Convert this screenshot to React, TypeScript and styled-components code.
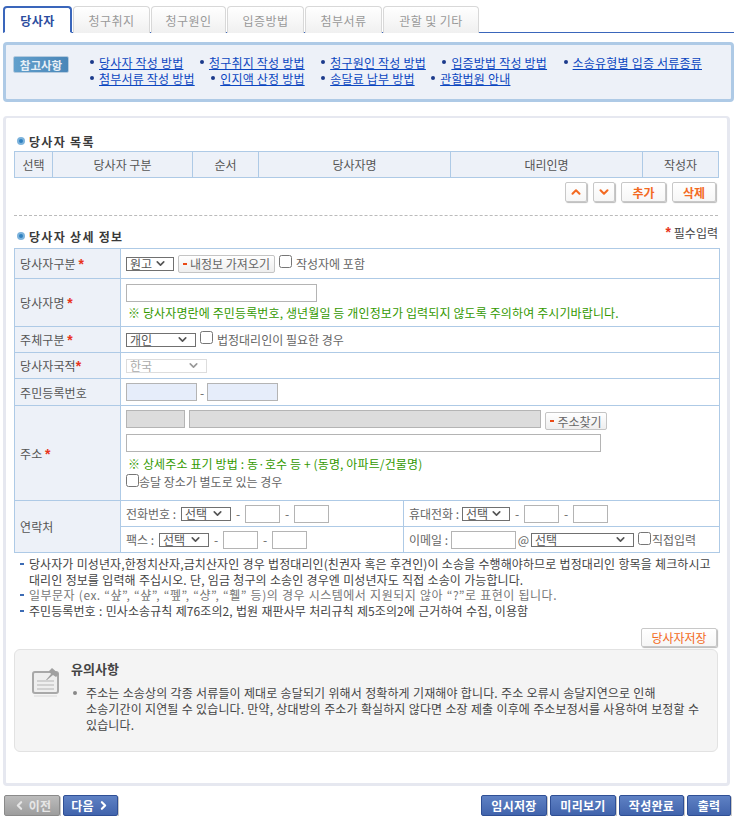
import React from 'react'
import styled, { createGlobalStyle } from 'styled-components'
import { ChevronDown, ChevronLeft, ChevronRight, ChevronUp } from 'lucide-react'

const GlobalStyle = createGlobalStyle`
  html, body {
    margin: 0;
    background: #fff;
  }
  body {
    font-family: "Noto Sans CJK KR", "Liberation Sans", sans-serif;
    font-size: 12px;
    color: #555;
  }
  * {
    box-sizing: border-box;
  }
`

const Page = styled.div`
  width: 731px;
  margin-left: 3px;
  padding-top: 6px;
`

// tabs
const TabBar = styled.div`
  display: flex;
  height: 27px;
  gap: 1px;
  border-bottom: 1px solid #3a66bb;
`

const Tab = styled.div<{ $width: number; $active?: boolean }>`
  width: ${p => p.$width}px;
  height: 27px;
  display: flex;
  align-items: center;
  justify-content: center;
  font-size: 12px;
  border-radius: 4px 4px 0 0;
  color: ${p => (p.$active ? '#2b4c9e' : '#999')};
  font-weight: ${p => (p.$active ? 700 : 400)};
  background: ${p => (p.$active ? '#fff' : 'linear-gradient(#fff, #f0f0f0)')};
  border: ${p => (p.$active ? '2px solid #3a66bb' : '1px solid #d8d8d8')};
  border-bottom: ${p => (p.$active ? '1px solid #fff' : 'none')};
  letter-spacing: 0.4px;
`

// top notice
const Notice = styled.div`
  margin-top: 9px;
  height: 60px;
  display: flex;
  align-items: flex-start;
  background: #edf1f8;
  border: 3px solid #aecae6;
  border-radius: 4px;
  padding: 9px 0 0 7px;
`

const Badge = styled.div`
  width: 56px;
  height: 17px;
  margin-top: 2px;
  flex: none;
  display: flex;
  align-items: center;
  justify-content: center;
  color: #e6eff6;
  font-size: 11.5px;
  font-weight: 700;
  border-radius: 2px;
  background: linear-gradient(90deg, #62a0cc, #4a86b8);
  border: 1px solid #b5cbdf;
`

const LinkList = styled.div`
  width: 640px;
  margin: 0 0 0 21px;
  display: flex;
  flex-wrap: wrap;
  column-gap: 16.5px;
  row-gap: 0;
`

const LinkItem = styled.div`
  display: flex;
  align-items: center;
  height: 16px;
`

const Dot = styled.span`
  width: 4px;
  height: 4px;
  margin-right: 5px;
  border-radius: 50%;
  background: #1b3a8c;
`

const HelpLink = styled.a`
  color: #0b46c0;
  text-decoration: underline;
  letter-spacing: 0.2px;
`

// main card
const Card = styled.div`
  margin-top: 14px;
  width: 727px;
  height: 670px;
  padding: 14px 9px 0 8px;
  background: #fff;
  border: 3px solid #e6e8f0;
  border-top-width: 2px;
  border-radius: 4px;
`

const SectionTitle = styled.h2`
  display: flex;
  align-items: center;
  gap: 4px;
  height: 18px;
  margin: 0 0 1px;
  font-size: 12px;
  font-weight: 700;
  color: #3a3a3a;
  letter-spacing: 1.3px;
`

const TitleMark = styled.span`
  width: 8px;
  height: 8px;
  margin-left: 3px;
  border-radius: 50%;
  background: #2f80c0;
  border: 2px solid #7db3dc;
`

const ListTable = styled.table`
  width: 704px;
  height: 27px;
  table-layout: fixed;
  border-collapse: collapse;
`

const HeadCell = styled.th<{ $width: number }>`
  width: ${p => p.$width}px;
  padding: 0;
  font-weight: 400;
  color: #555;
  background: #edf1f8;
  border: 1px solid #aecae6;
`

const ListActions = styled.div`
  display: flex;
  justify-content: flex-end;
  gap: 6px;
  margin-top: 4px;
  padding-right: 2px;
  height: 21px;
`

const ActionButton = styled.button<{ $width: number }>`
  width: ${p => p.$width}px;
  height: 20px;
  padding: 0;
  display: flex;
  align-items: center;
  justify-content: center;
  font: inherit;
  font-weight: 700;
  color: #f36a22;
  background: linear-gradient(#fff, #f6f6f6);
  border: 1px solid #c8c8c8;
  border-radius: 2px;
  box-shadow: 1px 1px 1px #bbb;
`

const Divider = styled.hr`
  margin: 12px 0 0;
  height: 0;
  border: none;
  border-top: 1px dashed #bbb;
`

const DetailHeader = styled.div`
  height: 32px;
  display: flex;
  justify-content: space-between;
  align-items: flex-start;
  padding-top: 11px;
`

const Required = styled.div`
  height: 18px;
  margin-top: -4px;
  display: flex;
  align-items: center;
  gap: 3px;
  color: #444;
`

const Star = styled.span`
  color: #e8341c;
  font-family: "Liberation Sans", sans-serif;
  font-size: 14px;
  font-weight: 700;
  line-height: 12px;
`

const FormTable = styled.table`
  width: 705px;
  table-layout: fixed;
  border-collapse: collapse;
`

const Row = styled.tr<{ $height: number }>`
  height: ${p => p.$height}px;
`

const LabelCell = styled.th`
  width: 106px;
  padding: 0 0 0 5px;
  text-align: left;
  font-weight: 400;
  color: #555;
  background: #edf1f8;
  border: 1px solid #aecae6;
  letter-spacing: 0.1px;
`

const FieldCell = styled.td`
  padding: 0 0 0 5px;
  border: 1px solid #aecae6;
  color: #666;
`

const AddressCell = styled(FieldCell)`
  vertical-align: top;
  padding-top: 4px;
`

const Inline = styled.div<{ $gap?: number }>`
  display: flex;
  align-items: center;
  gap: ${p => p.$gap ?? 0}px;
`

const Stack = styled.div`
  display: flex;
  flex-direction: column;
  align-items: flex-start;
`

const FieldLabel = styled.span<{ $width: number }>`
  width: ${p => p.$width}px;
  flex: none;
  white-space: nowrap;
`

const TextInput = styled.input<{ $width: number; $fill?: string; $top?: number }>`
  width: ${p => p.$width}px;
  height: 18px;
  margin-top: ${p => p.$top ?? 0}px;
  padding: 0;
  flex: none;
  border: 1px solid #b4b4b4;
  background: ${p => p.$fill ?? '#fff'};
  outline: none;
`

// native select stays on top but invisible, the box underneath is what shows
const SelectWrapper = styled.div<{ $width: number }>`
  position: relative;
  width: ${p => p.$width}px;
  height: 14px;
  flex: none;
`

const NativeSelect = styled.select`
  position: absolute;
  top: 0;
  left: 0;
  width: 100%;
  height: 100%;
  opacity: 0;
`

const SelectBox = styled.div<{ $disabled?: boolean }>`
  height: 100%;
  display: flex;
  align-items: center;
  justify-content: space-between;
  padding: 0 6px 0 3px;
  line-height: 12px;
  background: #fff;
  color: ${p => (p.$disabled ? '#aaa' : '#555')};
  border: 1px solid ${p => (p.$disabled ? '#ddd' : '#707070')};
`

const Select = ({ width, value, disabled }: { width: number; value: string; disabled?: boolean }) => (
  <SelectWrapper $width={width}>
    <SelectBox $disabled={disabled}>
      <span>{value}</span>
      <ChevronDown size={13} strokeWidth={3} color={disabled ? '#999' : '#555'} />
    </SelectBox>
    <NativeSelect defaultValue={value} disabled={disabled}>
      <option>{value}</option>
    </NativeSelect>
  </SelectWrapper>
)

const Check = styled.input.attrs({ type: 'checkbox' })`
  width: 13px;
  height: 13px;
  flex: none;
  margin: -4px 4px 0 4px;
`

const EmailCheck = styled(Check)`
  margin: -3px 1px 0 4px;
`

const DeliveryCheck = styled(Check)`
  margin: -3px 0 0 0;
`

const DeliveryRow = styled(Inline)`
  margin-top: 1px;
`

const SmallButton = styled.button<{ $width: number; $left?: number; $top?: number }>`
  width: ${p => p.$width}px;
  height: 18px;
  margin: ${p => p.$top ?? 0}px 0 ${p => -(p.$top ?? 0)}px ${p => p.$left ?? 0}px;
  flex: none;
  padding: 0;
  display: flex;
  align-items: center;
  justify-content: center;
  gap: 3px;
  font: inherit;
  color: #666;
  background: linear-gradient(#fff, #eee);
  border: 1px solid #c4c4c4;
  border-radius: 2px;

  &::before {
    content: '';
    width: 4px;
    height: 2px;
    background: #ea4a16;
  }
`

const GreenNote = styled.div<{ $top?: number }>`
  margin-top: ${p => p.$top ?? 0}px;
  margin-left: 2px;
  color: #339900;
  letter-spacing: 0.12px;
`

const Dash = styled.span<{ $width?: number }>`
  width: ${p => p.$width ?? 14}px;
  flex: none;
  text-align: center;
`

// notes under the form
const Notes = styled.ul`
  margin: 3px 0 0;
  padding: 0 0 0 6px;
  list-style: none;
`

const Note = styled.li<{ $muted?: boolean }>`
  position: relative;
  padding-left: 9px;
  line-height: 15.5px;
  white-space: nowrap;
  color: ${p => (p.$muted ? '#777' : '#444')};
  letter-spacing: ${p => (p.$muted ? '0.5px' : '0.08px')};
  word-spacing: 0.5px;

  &::before {
    content: '';
    position: absolute;
    left: 0;
    top: 7px;
    width: 4px;
    height: 2px;
    background: #3d6cb5;
  }
`

const SaveRow = styled.div`
  display: flex;
  justify-content: flex-end;
  margin-top: 10px;
  padding-right: 1px;
`

const SaveButton = styled(ActionButton)`
  font-weight: 400;
  height: 19px;
`

// caution box
const Caution = styled.div`
  margin-top: 2px;
  width: 704px;
  height: 103px;
  display: flex;
  padding: 11px 14px 0 17px;
  background: #f4f4f4;
  border: 1px solid #e2e2e2;
  border-radius: 6px;
`

const PinIcon = styled.svg`
  flex: none;
  width: 30px;
  height: 38px;
  margin-top: 2px;
`

const CautionBody = styled.div`
  margin-left: 9px;
`

const CautionTitle = styled.div`
  font-size: 13px;
  font-weight: 700;
  color: #444;
  line-height: 16px;
`

const CautionText = styled.p`
  position: relative;
  margin: 8px 0 0;
  padding-left: 15px;
  color: #444;
  line-height: 16px;
  letter-spacing: 0.12px;
  word-spacing: 0.4px;

  &::before {
    content: '';
    position: absolute;
    left: 2px;
    top: 6px;
    width: 4px;
    height: 4px;
    border-radius: 50%;
    background: #888;
  }
`

// footer
const Footer = styled.div`
  width: 728px;
  margin-top: 9px;
  padding-left: 1px;
  display: flex;
  justify-content: space-between;
`

const FooterGroup = styled.div`
  display: flex;
  gap: 3px;
`

const FooterButton = styled.button<{ $width: number; $gray?: boolean }>`
  width: ${p => p.$width}px;
  height: 21px;
  padding: 0;
  display: flex;
  align-items: center;
  justify-content: center;
  gap: 3px;
  font: inherit;
  font-weight: 700;
  letter-spacing: 0.3px;
  color: ${p => (p.$gray ? '#e6e6e6' : '#fff')};
  background: ${p =>
    p.$gray ? 'linear-gradient(#bcbcbc, #9d9d9d)' : 'linear-gradient(#5f81c4, #4164ac)'};
  border: 1px solid ${p => (p.$gray ? '#8a8a8a' : '#2f4f95')};
  border-radius: 2px;
  box-shadow: 1px 1px 0 #c8c8c8;
`

const tabs = [
  { label: '당사자', width: 69, active: true },
  { label: '청구취지', width: 77 },
  { label: '청구원인', width: 75 },
  { label: '입증방법', width: 77 },
  { label: '첨부서류', width: 77 },
  { label: '관할 및 기타', width: 96 },
]

const helpLinks = [
  '당사자 작성 방법',
  '청구취지 작성 방법',
  '청구원인 작성 방법',
  '입증방법 작성 방법',
  '소송유형별 입증 서류종류',
  '첨부서류 작성 방법',
  '인지액 산정 방법',
  '송달료 납부 방법',
  '관할법원 안내',
]

const listColumns = [
  { label: '선택', width: 38 },
  { label: '당사자 구분', width: 140 },
  { label: '순서', width: 66 },
  { label: '당사자명', width: 192 },
  { label: '대리인명', width: 192 },
  { label: '작성자', width: 76 },
]

const App = () => {
  return (
    <Page>
      <GlobalStyle />
      <TabBar>
        {tabs.map(tab => (
          <Tab key={tab.label} $width={tab.width} $active={tab.active}>
            {tab.label}
          </Tab>
        ))}
      </TabBar>

      <Notice>
        <Badge>참고사항</Badge>
        <LinkList>
          {helpLinks.map(link => (
            <LinkItem key={link}>
              <Dot />
              <HelpLink href="#">{link}</HelpLink>
            </LinkItem>
          ))}
        </LinkList>
      </Notice>

      <Card>
        <SectionTitle>
          <TitleMark />
          당사자 목록
        </SectionTitle>
        <ListTable>
          <thead>
            <tr>
              {listColumns.map(col => (
                <HeadCell key={col.label} $width={col.width}>
                  {col.label}
                </HeadCell>
              ))}
            </tr>
          </thead>
        </ListTable>
        <ListActions>
          <ActionButton $width={22}>
            <ChevronUp size={14} strokeWidth={3.5} />
          </ActionButton>
          <ActionButton $width={22}>
            <ChevronDown size={14} strokeWidth={3.5} />
          </ActionButton>
          <ActionButton $width={45}>추가</ActionButton>
          <ActionButton $width={44}>삭제</ActionButton>
        </ListActions>

        <Divider />

        <DetailHeader>
          <SectionTitle>
            <TitleMark />
            당사자 상세 정보
          </SectionTitle>
          <Required>
            <Star>*</Star>
            필수입력
          </Required>
        </DetailHeader>

        <FormTable>
          <colgroup>
            <col width={106} />
            <col width={283} />
            <col width={316} />
          </colgroup>
          <tbody>
            <Row $height={30}>
              <LabelCell>
                당사자구분 <Star>*</Star>
              </LabelCell>
              <FieldCell colSpan={2}>
                <Inline>
                  <Select width={48} value="원고" />
                  <SmallButton $width={97} $left={4}>
                    내정보 가져오기
                  </SmallButton>
                  <Check />
                  작성자에 포함
                </Inline>
              </FieldCell>
            </Row>
            <Row $height={48}>
              <LabelCell>
                당사자명 <Star>*</Star>
              </LabelCell>
              <FieldCell colSpan={2}>
                <Stack>
                  <TextInput $width={191} />
                  <GreenNote $top={2}>
                    ※ 당사자명란에 주민등록번호, 생년월일 등 개인정보가 입력되지 않도록 주의하여 주시기바랍니다.
                  </GreenNote>
                </Stack>
              </FieldCell>
            </Row>
            <Row $height={26}>
              <LabelCell>
                주체구분 <Star>*</Star>
              </LabelCell>
              <FieldCell colSpan={2}>
                <Inline>
                  <Select width={70} value="개인" />
                  <Check />
                  법정대리인이 필요한 경우
                </Inline>
              </FieldCell>
            </Row>
            <Row $height={26}>
              <LabelCell>
                당사자국적<Star>*</Star>
              </LabelCell>
              <FieldCell colSpan={2}>
                <Select width={81} value="한국" disabled />
              </FieldCell>
            </Row>
            <Row $height={27}>
              <LabelCell>주민등록번호</LabelCell>
              <FieldCell colSpan={2}>
                <Inline>
                  <TextInput $width={71} $fill="#e6edfa" />
                  <Dash $width={10}>-</Dash>
                  <TextInput $width={71} $fill="#e6edfa" />
                </Inline>
              </FieldCell>
            </Row>
            <Row $height={95}>
              <LabelCell>
                주소 <Star>*</Star>
              </LabelCell>
              <AddressCell colSpan={2}>
                <Stack>
                  <Inline $gap={4}>
                    <TextInput $width={59} $fill="#dcdcdc" />
                    <TextInput $width={352} $fill="#dcdcdc" />
                    <SmallButton $width={62} $top={2}>
                      주소찾기
                    </SmallButton>
                  </Inline>
                  <TextInput $width={475} $top={6} />
                  <GreenNote $top={3}>※ 상세주소 표기 방법 : 동·호수 등 + (동명, 아파트/건물명)</GreenNote>
                  <DeliveryRow>
                    <DeliveryCheck />
                    송달 장소가 별도로 있는 경우
                  </DeliveryRow>
                </Stack>
              </AddressCell>
            </Row>
            <Row $height={26}>
              <LabelCell rowSpan={2}>연락처</LabelCell>
              <FieldCell>
                <Inline>
                  <FieldLabel $width={55}>전화번호 :</FieldLabel>
                  <Select width={50} value="선택" />
                  <Dash>-</Dash>
                  <TextInput $width={35} />
                  <Dash>-</Dash>
                  <TextInput $width={35} />
                </Inline>
              </FieldCell>
              <FieldCell>
                <Inline>
                  <FieldLabel $width={53}>휴대전화 :</FieldLabel>
                  <Select width={48} value="선택" />
                  <Dash>-</Dash>
                  <TextInput $width={35} />
                  <Dash>-</Dash>
                  <TextInput $width={35} />
                </Inline>
              </FieldCell>
            </Row>
            <Row $height={26}>
              <FieldCell>
                <Inline>
                  <FieldLabel $width={33}>팩스 :</FieldLabel>
                  <Select width={50} value="선택" />
                  <Dash>-</Dash>
                  <TextInput $width={35} />
                  <Dash>-</Dash>
                  <TextInput $width={35} />
                </Inline>
              </FieldCell>
              <FieldCell>
                <Inline>
                  <FieldLabel $width={42}>이메일 :</FieldLabel>
                  <TextInput $width={65} />
                  <Dash $width={15}>@</Dash>
                  <Select width={103} value="선택" />
                  <EmailCheck />
                  직접입력
                </Inline>
              </FieldCell>
            </Row>
          </tbody>
        </FormTable>

        <Notes>
          <Note>
            당사자가 미성년자,한정치산자,금치산자인 경우 법정대리인(친권자 혹은 후견인)이 소송을 수행해야하므로 법정대리인 항목을 체크하시고
            <br />
            대리인 정보를 입력해 주십시오. 단, 임금 청구의 소송인 경우엔 미성년자도 직접 소송이 가능합니다.
          </Note>
          <Note $muted>일부문자 (ex. “샾”, “샾”, “펲”, “샹”, “휄” 등)의 경우 시스템에서 지원되지 않아 “?”로 표현이 됩니다.</Note>
          <Note>주민등록번호 : 민사소송규칙 제76조의2, 법원 재판사무 처리규칙 제5조의2에 근거하여 수집, 이용함</Note>
        </Notes>

        <SaveRow>
          <SaveButton $width={76}>당사자저장</SaveButton>
        </SaveRow>

        <Caution>
          <PinIcon viewBox="0 0 30 38" fill="none">
            <rect x="1" y="9" width="25" height="21" rx="2" fill="#eee" stroke="#a8a8a8" strokeWidth="2" />
            <path d="M5 18h17M5 22h17M5 26h17" stroke="#b4b4b4" strokeWidth="1" />
            <path d="M14 17l5-6-2-3 3-3 7 6-3 3-3-2-6 5z" fill="#a0a0a0" />
            <rect x="2" y="32" width="23" height="2" fill="#e6e6e6" />
          </PinIcon>
          <CautionBody>
            <CautionTitle>유의사항</CautionTitle>
            <CautionText>
              주소는 소송상의 각종 서류들이 제대로 송달되기 위해서 정확하게 기재해야 합니다. 주소 오류시 송달지연으로 인해
              <br />
              소송기간이 지연될 수 있습니다. 만약, 상대방의 주소가 확실하지 않다면 소장 제출 이후에 주소보정서를 사용하여 보정할 수
              <br />
              있습니다.
            </CautionText>
          </CautionBody>
        </Caution>
      </Card>

      <Footer>
        <FooterGroup>
          <FooterButton $width={56} $gray>
            <ChevronLeft size={13} strokeWidth={4} />
            이전
          </FooterButton>
          <FooterButton $width={55}>
            다음
            <ChevronRight size={13} strokeWidth={4} />
          </FooterButton>
        </FooterGroup>
        <FooterGroup>
          <FooterButton $width={66}>임시저장</FooterButton>
          <FooterButton $width={66}>미리보기</FooterButton>
          <FooterButton $width={65}>작성완료</FooterButton>
          <FooterButton $width={44}>출력</FooterButton>
        </FooterGroup>
      </Footer>
    </Page>
  )
}

export default App
